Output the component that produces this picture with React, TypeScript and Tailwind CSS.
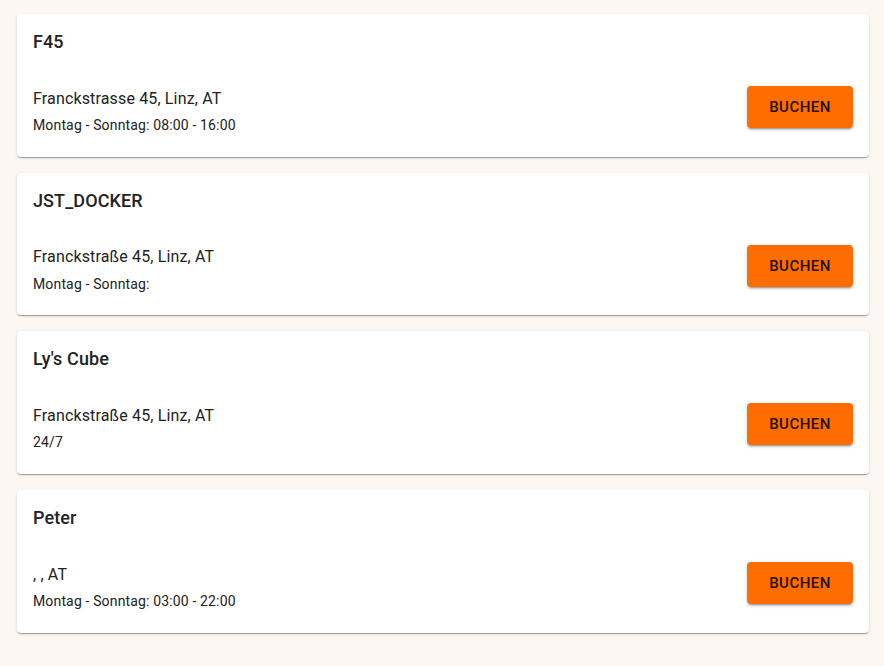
import * as React from "react";

type Location = {
  id: string;
  name: string;
  address: string;
  hours: string;
};

const locations: Location[] = [
  { id: "f45", name: "F45", address: "Franckstrasse 45, Linz, AT", hours: "Montag - Sonntag: 08:00 - 16:00" },
  { id: "jst", name: "JST_DOCKER", address: "Franckstraße 45, Linz, AT", hours: "Montag - Sonntag:" },
  { id: "ly", name: "Ly's Cube", address: "Franckstraße 45, Linz, AT", hours: "24/7" },
  { id: "peter", name: "Peter", address: ", , AT", hours: "Montag - Sonntag: 03:00 - 22:00" },
];

const LocationCard = ({ name, address, hours }: Location) => (
  <div className="bg-white rounded-[4px] shadow-[0_2px_1px_-1px_rgba(0,0,0,0.2),0_1px_1px_0_rgba(0,0,0,0.14),0_1px_3px_0_rgba(0,0,0,0.12)] pt-[14px] px-4 pb-[21.5px]">
    <h2 className="text-[18px] leading-7 font-medium tracking-[0.1px] text-[#222]">{name}</h2>
    <div className="mt-[30.67px] flex items-start justify-between">
      <div className="text-[#222]">
        <p className="text-base leading-6 tracking-[0.15px]">{address}</p>
        <p className="mt-[4.5px] text-sm leading-5 tracking-[0.15px]">{hours}</p>
      </div>
      <button
        type="button"
        className="mt-[-0.5px] h-[42px] w-[106px] rounded-[4px] bg-[#ff6d00] text-[15px] font-medium uppercase tracking-[0.46px] text-[#231000] shadow-[0_3px_1px_-2px_rgba(0,0,0,0.2),0_2px_2px_0_rgba(0,0,0,0.14),0_1px_5px_0_rgba(0,0,0,0.12)]"
      >
        Buchen
      </button>
    </div>
  </div>
);

export default function App() {
  return (
    <div className="min-h-screen bg-[#fdf7f3] pt-[14px] pl-[17px] pr-[15px] pb-8 font-['Roboto',sans-serif]">
      <div className="flex flex-col gap-4">
        {locations.map((loc) => (
          <LocationCard key={loc.id} {...loc} />
        ))}
      </div>
    </div>
  );
}
